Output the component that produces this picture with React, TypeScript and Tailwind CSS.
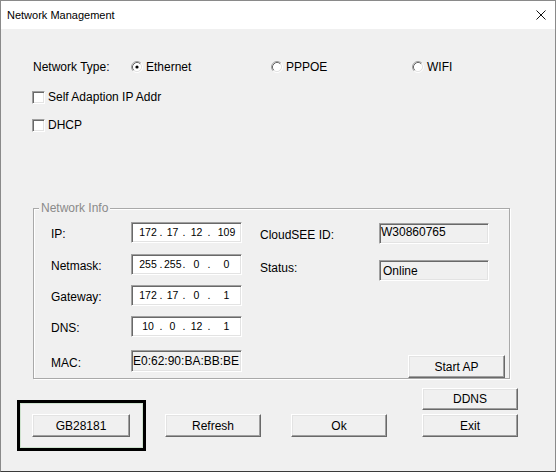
import React from "react";

const font = { fontFamily: '"Liberation Sans", Arial, sans-serif' };

function Radio({ checked }: { checked?: boolean }) {
  return (
    <svg width="12" height="12" viewBox="0 0 12 12" className="shrink-0">
      <circle cx="6" cy="6" r="4.2" fill="#fff" />
      <path d="M2.11 9.89 A5.5 5.5 0 0 1 9.89 2.11" fill="none" stroke="#a0a0a0" strokeWidth="1" />
      <path d="M9.89 2.11 A5.5 5.5 0 0 1 2.11 9.89" fill="none" stroke="#ffffff" strokeWidth="1" />
      <path d="M2.82 9.18 A4.5 4.5 0 0 1 9.18 2.82" fill="none" stroke="#696969" strokeWidth="1" />
      <path d="M9.18 2.82 A4.5 4.5 0 0 1 2.82 9.18" fill="none" stroke="#e3e3e3" strokeWidth="1" />
      {checked && <circle cx="6" cy="6" r="1.6" fill="#000" />}
    </svg>
  );
}

function Checkbox() {
  return (
    <div className="w-[13px] h-[13px] shrink-0 bg-white border border-t-[#a0a0a0] border-l-[#a0a0a0] border-b-white border-r-white shadow-[inset_1px_1px_0_#696969,inset_-1px_-1px_0_#e3e3e3]" />
  );
}

function Btn({ label, w = "w-[96px]", h = "h-[23px]" }: { label: string; w?: string; h?: string }) {
  return (
    <div
      className={`${w} ${h} shrink-0 flex items-center justify-center bg-[#f0f0f0] border border-t-white border-l-white border-b-[#696969] border-r-[#696969] shadow-[inset_-1px_-1px_0_#a0a0a0,inset_1px_1px_0_#e3e3e3] text-[12px] text-black`}
    >
      {label}
    </div>
  );
}

const sunken =
  "border border-t-[#a0a0a0] border-l-[#a0a0a0] border-b-white border-r-white shadow-[inset_1px_1px_0_#696969,inset_-1px_-1px_0_#e3e3e3]";

function IpBox({ v }: { v: [string, string, string, string] }) {
  return (
    <div className={`w-[111px] h-[21px] bg-white ${sunken} flex items-center text-[10.5px] text-black leading-none`}>
      <div className="w-[6px] shrink-0" />
      <div className="w-[20px] shrink-0 text-center">{v[0]}</div>
      <div className="w-[6px] shrink-0 text-center">.</div>
      <div className="w-[17px] shrink-0 text-center">{v[1]}</div>
      <div className="w-[6px] shrink-0 text-center">.</div>
      <div className="w-[19px] shrink-0 text-center">{v[2]}</div>
      <div className="w-[6px] shrink-0 text-center">.</div>
      <div className="w-[29px] shrink-0 text-center">{v[3]}</div>
    </div>
  );
}

function Row({ label, mt, children }: { label: string; mt: string; children: React.ReactNode }) {
  return (
    <div className={`${mt} flex items-center`}>
      <div className="w-[80px] shrink-0 pt-[4px] text-[12px] text-black">{label}</div>
      {children}
    </div>
  );
}

export default function App() {
  return (
    <div
      style={font}
      className="w-[556px] h-[472px] flex flex-col border border-[#8a8a8a] border-b-[#3a3a3a] bg-[#f0f0f0] overflow-hidden"
    >
      {/* Title bar */}
      <div className="h-[28px] shrink-0 bg-white flex items-center justify-between pl-[6px] pr-[9px]">
        <span className="text-[11px] text-black">Network Management</span>
        <svg width="10" height="10" viewBox="0 0 10 10">
          <path d="M0.5 0.5 L9.5 9.5 M9.5 0.5 L0.5 9.5" stroke="#111" strokeWidth="1" />
        </svg>
      </div>

      {/* Body */}
      <div className="flex-1 flex flex-col text-[12px] text-black">
        {/* Network type */}
        <div className="mt-[30px] h-[16px] flex items-center pl-[32px]">
          <div className="w-[98px] shrink-0">Network Type:</div>
          <div className="w-[140px] shrink-0 flex items-center">
            <Radio checked />
            <span className="ml-[3px]">Ethernet</span>
          </div>
          <div className="w-[141px] shrink-0 flex items-center">
            <Radio />
            <span className="ml-[3px]">PPPOE</span>
          </div>
          <div className="flex items-center">
            <Radio />
            <span className="ml-[3px]">WIFI</span>
          </div>
        </div>

        <div className="mt-[14px] h-[16px] flex items-center pl-[31px]">
          <Checkbox />
          <span className="ml-[3px]">Self Adaption IP Addr</span>
        </div>
        <div className="mt-[12px] h-[16px] flex items-center pl-[31px]">
          <Checkbox />
          <span className="ml-[3px]">DHCP</span>
        </div>

        {/* Group box */}
        <div className="mt-[75px] ml-[32px] w-[477px] h-[171px] shrink-0 relative border border-[#a9a9a9] shadow-[inset_1px_1px_0_#fff,1px_1px_0_#fff] flex">
          <span className="absolute -top-[9px] left-[5px] px-[2px] h-[16px] leading-[16px] bg-[#f0f0f0] text-[#8a8a8a]">
            Network Info
          </span>

          {/* Left column */}
          <div className="pl-[17px] pt-0 flex flex-col">
            <Row label="IP:" mt="mt-[12px]">
              <IpBox v={["172", "17", "12", "109"]} />
            </Row>
            <Row label="Netmask:" mt="mt-[10px]">
              <IpBox v={["255", "255", "0", "0"]} />
            </Row>
            <Row label="Gateway:" mt="mt-[9px]">
              <IpBox v={["172", "17", "0", "1"]} />
            </Row>
            <Row label="DNS:" mt="mt-[9px]">
              <IpBox v={["10", "0", "12", "1"]} />
            </Row>
            <Row label="MAC:" mt="mt-[13px]">
              <div className={`w-[111px] h-[22px] bg-[#f0f0f0] ${sunken} flex items-center pl-[1px] text-[12px] whitespace-nowrap overflow-hidden`}>
                E0:62:90:BA:BB:BE
              </div>
            </Row>
          </div>

          {/* Right column */}
          <div className="ml-[18px] flex-1 pr-[4px] flex flex-col">
            <div className="mt-[13px] flex items-center">
              <div className="w-[119px] shrink-0 pt-[4px]">CloudSEE ID:</div>
              <div className={`w-[110px] h-[21px] bg-[#f0f0f0] ${sunken} pl-[1px] leading-[16px]`}>W30860765</div>
            </div>
            <div className="mt-[15px] flex items-center">
              <div className="w-[119px] shrink-0 pb-[4px]">Status:</div>
              <div className={`w-[110px] h-[21px] bg-[#f0f0f0] ${sunken} pl-[3px] pt-[2px] leading-[16px]`}>Online</div>
            </div>
            <div className="mt-[74px] self-end">
              <Btn label="Start AP" w="w-[97px]" />
            </div>
          </div>
        </div>

        {/* Bottom buttons */}
        <div className="mt-[9px] flex items-start">
          <div className="ml-[16px] mt-[12px] w-[129px] h-[51px] shrink-0 border-[3px] border-black shadow-[inset_0_0_0_1px_#cfe3cf] pl-[12px] pt-[11px]">
            <Btn label="GB28181" w="w-[98px]" />
          </div>
          <div className="ml-[19px] mt-[26px]">
            <Btn label="Refresh" />
          </div>
          <div className="ml-[30px] mt-[26px]">
            <Btn label="Ok" />
          </div>
          <div className="ml-[35px] flex flex-col">
            <Btn label="DDNS" h="h-[22px]" />
            <div className="mt-[4px]">
              <Btn label="Exit" />
            </div>
          </div>
        </div>
      </div>
    </div>
  );
}
